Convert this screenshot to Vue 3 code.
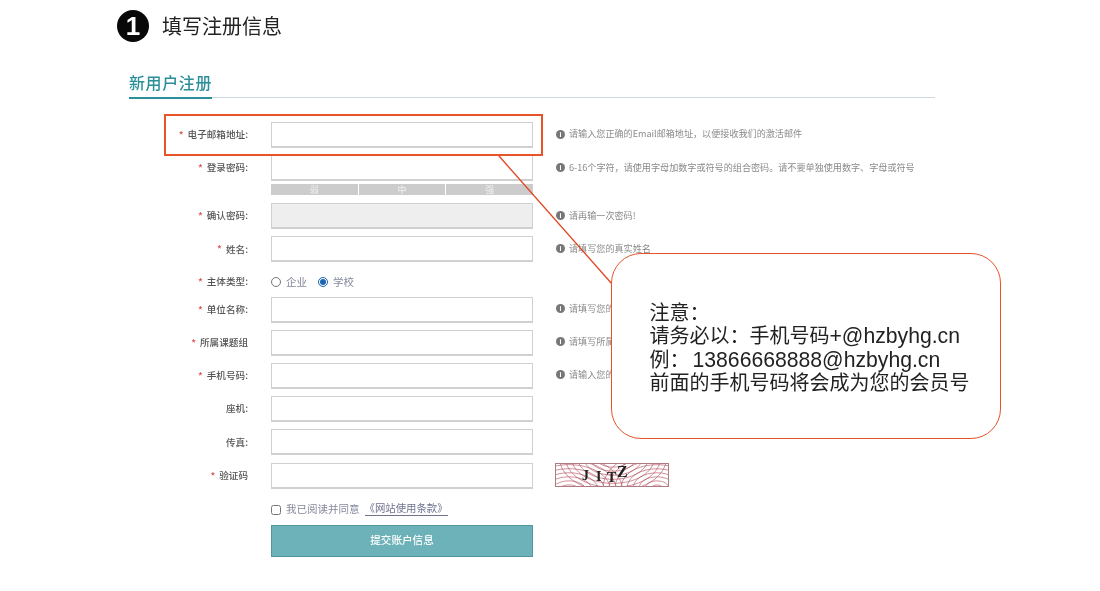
<script setup>
const rowsTop = [
  { label: '电子邮箱地址:', req: true, hint: '请输入您正确的Email邮箱地址\uFF0C以便接收我们的激活邮件' },
  { label: '登录密码:', req: true, hint: '6-16个字符\uFF0C请使用字母加数字或符号的组合密码。请不要单独使用数字、字母或符号', strength: true },
  { label: '确认密码:', req: true, hint: '请再输一次密码!', disabled: true },
  { label: '姓名:', req: true, hint: '请填写您的真实姓名' }
]
const rowsBottom = [
  { label: '单位名称:', req: true, hint: '请填写您的单位名称' },
  { label: '所属课题组', req: true, hint: '请填写所属课题组名称' },
  { label: '手机号码:', req: true, hint: '请输入您的手机号码' },
  { label: '座机:' },
  { label: '传真:' },
  { label: '验证码', req: true, captcha: true }
]
const swirls = []
const centres = [[14, 30], [58, -8], [102, 26]]
for (const [cx, cy] of centres) {
  for (let r = 6; r < 60; r += 6) {
    swirls.push(`M${cx - r} ${cy}C${cx - r} ${cy - r * 0.9} ${cx + r} ${cy - r * 0.9} ${cx + r} ${cy}C${cx + r} ${cy + r * 0.9} ${cx - r} ${cy + r * 0.9} ${cx - r} ${cy}`)
  }
}
</script>

<template>
  <div class="page">
    <header class="step">
      <span class="step-num">1</span>
      <h1 class="step-title">填写注册信息</h1>
    </header>

    <section class="panel">
      <h2 class="panel-title"><span>新用户注册</span></h2>

      <form class="form">
        <div v-for="r in rowsTop" :key="r.label" class="row" :class="{ 'row-tall': r.strength }">
          <label class="label"><i v-if="r.req" class="star">*</i>{{ r.label }}</label>
          <div class="field">
            <div class="input" :class="{ disabled: r.disabled }"></div>
            <div v-if="r.strength" class="strength"><span>弱</span><span>中</span><span>强</span></div>
          </div>
          <p class="hint"><span class="info">i</span>{{ r.hint }}</p>
        </div>

        <div class="row row-radio">
          <label class="label"><i class="star">*</i>主体类型:</label>
          <div class="field radios">
            <label class="choice"><input type="radio" name="kind" />企业</label>
            <label class="choice"><input type="radio" name="kind" checked />学校</label>
          </div>
        </div>

        <div v-for="r in rowsBottom" :key="r.label" class="row">
          <label class="label"><i v-if="r.req" class="star">*</i>{{ r.label }}</label>
          <div class="field"><div class="input"></div></div>
          <p v-if="r.hint" class="hint"><span class="info">i</span>{{ r.hint }}</p>
          <div v-if="r.captcha" class="captcha">
            <svg width="114" height="24" viewBox="0 0 114 24">
              <clipPath id="capclip"><rect width="114" height="24" /></clipPath>
              <rect width="114" height="24" fill="#fff" />
              <g clip-path="url(#capclip)">
                <path v-for="(d, i) in swirls" :key="i" :d="d" fill="none" stroke="#b5505f" stroke-width=".8" opacity=".8" />
              </g>
              <rect x=".5" y=".5" width="113" height="23" fill="none" stroke="#b07a82" />
            </svg>
            <span class="cap-text"><b>J</b><b>I</b><b>T</b><b class="cap-z">Z</b></span>
          </div>
        </div>

        <div class="agree">
          <label class="choice"><input type="checkbox" />我已阅读并同意</label>
          <a class="terms">《网站使用条款》</a>
        </div>
        <button type="button" class="submit">提交账户信息</button>
      </form>
    </section>

    <div class="mark-box"></div>
    <svg class="mark-line" width="1100" height="591" viewBox="0 0 1100 591">
      <line x1="499" y1="156" x2="612" y2="284" stroke="#e2431c" stroke-width="1.3" />
    </svg>
    <aside class="callout">
      <p>注意&#xFF1A;</p>
      <p>请务必以&#xFF1A;手机号码<span class="latin">+@hzbyhg.cn</span></p>
      <p>例&#xFF1A;<span class="latin num">13866668888@hzbyhg.cn</span></p>
      <p>前面的手机号码将会成为您的会员号</p>
    </aside>
  </div>
</template>

<style>
html, body { margin: 0; background: #fff; }
</style>

<style scoped>
.page {
  position: relative;
  width: 1100px;
  height: 591px;
  overflow: hidden;
  background: #fff;
  font-family: "Liberation Sans", "Noto Sans CJK SC", sans-serif;
  box-sizing: border-box;
  padding: 9px 0 0 117px;
}
.step { display: flex; align-items: center; gap: 13px; height: 33px; filter: blur(.3px); }
.step-num {
  width: 32px; height: 32px; border-radius: 50%;
  background: #080808; color: #fff;
  display: flex; align-items: center; justify-content: center;
  font: 700 26px/1 "Liberation Sans", sans-serif;
}
.step-title { margin: 0; font: 400 20px/1 "Noto Sans CJK SC", sans-serif; color: #222; }

.panel { margin: 29px 0 0 12px; width: 806px; }
.panel-title {
  margin: 0; height: 26px;
  border-bottom: 1px solid #cfd6e2;
  font: 500 16px/22px "Noto Sans CJK SC", sans-serif;
  letter-spacing: .6px; color: #2b8f99;
  filter: blur(.3px);
}
.panel-title span { display: inline-block; height: 26px; border-bottom: 2px solid #2b8f99; width: 83px; white-space: nowrap; }

.form { margin-top: 24px; filter: blur(.4px); }
.row { display: flex; align-items: flex-start; height: 33.2px; }
.row-tall { height: 48px; }
.row-radio { height: 27px; align-items: center; padding-bottom: 2px; box-sizing: border-box; }
.label {
  width: 119px; flex: none; height: 26px;
  display: flex; align-items: center; justify-content: flex-end;
  font: 500 9.6px/1 "Noto Sans CJK SC", sans-serif; color: #555;
}
.star { font-style: normal; color: #dd4b4b; margin-right: 4px; font-size: 10px; }
.field { width: 262px; margin-left: 23px; flex: none; }
.input {
  height: 26px; box-sizing: border-box;
  border: 1px solid #d0d0d0; border-width: 1px 1px 2px 1px; background: #fff;
}
.input.disabled { background: #eeeeee; }
.strength { display: flex; gap: 1px; margin-top: 3px; height: 11px; }
.strength span {
  flex: 1; background: #cccccc; color: #f2f2f2; text-align: center;
  font: 400 9px/11px "Noto Sans CJK SC", sans-serif;
}
.hint {
  margin: -1px 0 0 23px; height: 26px;
  display: flex; align-items: center; white-space: nowrap;
  font: 400 9.1px/1 "Noto Sans CJK SC", sans-serif; color: #8a8a8a;
}
.info {
  width: 9px; height: 9px; border-radius: 50%; background: #777; color: #fff;
  margin-right: 4px; flex: none; text-align: center;
  font: 700 7px/9px "Liberation Sans", sans-serif;
}
.radios { display: flex; gap: 11px; }
.choice {
  display: flex; align-items: center; gap: 5px;
  font: 400 10.5px/1 "Noto Sans CJK SC", sans-serif; color: #85889a;
}
.choice input { width: 10px; height: 10px; margin: 0; accent-color: #1c64b4; flex: none; }
.captcha { position: relative; margin-left: 22px; height: 24px; }
.captcha svg { display: block; }
.cap-text { position: absolute; inset: 0; font-family: "Liberation Serif", serif; color: #222; }
.cap-text b { position: absolute; top: 5px; font-size: 14px; line-height: 16px; }
.cap-text b:nth-child(1) { left: 27px; }
.cap-text b:nth-child(2) { left: 41px; top: 6px; }
.cap-text b:nth-child(3) { left: 52px; top: 7px; }
.cap-text .cap-z { left: 62px; top: 1px; font-size: 16px; }
.agree { display: flex; align-items: center; gap: 5px; margin: 7px 0 0 142px; height: 10px; padding-top: 2px; }
.terms {
  font: 400 10.4px/1 "Noto Sans CJK SC", sans-serif; color: #6f7390;
  border-bottom: 1px solid #6f7390; padding-bottom: 1px;
}
.submit {
  display: block; width: 262px; height: 32px; margin: 10px 0 0 142px; padding: 0;
  background: #6cb2b8; border: 1px solid #4f979e; color: #fff;
  font: 500 10.6px/1 "Noto Sans CJK SC", sans-serif;
}

.mark-box {
  position: absolute; left: 164px; top: 114px; width: 379px; height: 42px;
  box-sizing: border-box; border: 2px solid #ea5227;
}
.mark-line { position: absolute; left: 0; top: 0; pointer-events: none; }
.callout {
  position: absolute; left: 611px; top: 253px; width: 390px; height: 186px;
  box-sizing: border-box; border: 1.5px solid #e8532a; border-radius: 30px; background: #fff;
  padding: 46px 0 0 37.5px;
  font: 400 20px/23.4px "Noto Sans CJK SC", sans-serif; color: #222;
}
.callout p { margin: 0; white-space: nowrap; height: 23.4px; filter: blur(.2px); }
.latin { font: 400 21.2px/23.4px "Liberation Sans", sans-serif; }
.num { margin-left: 3px; }
</style>
